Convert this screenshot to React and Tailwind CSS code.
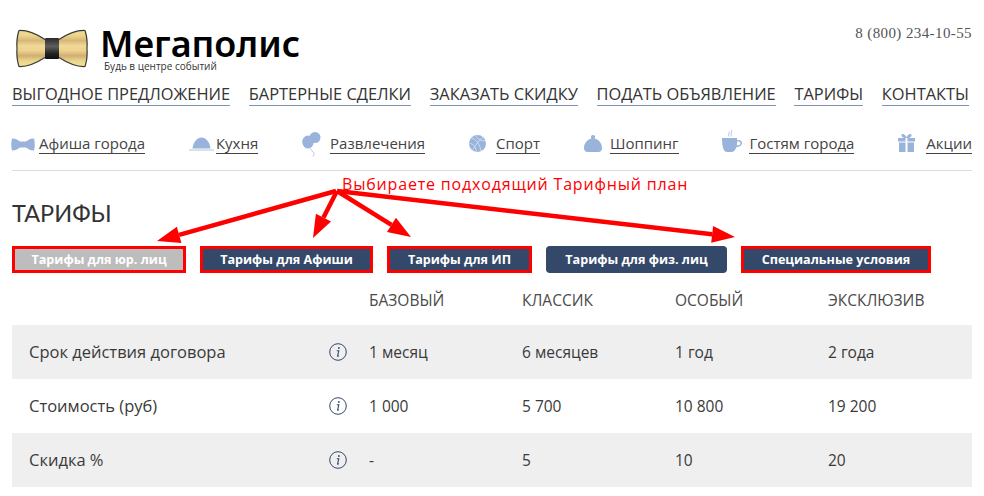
const mainLinks = [
  'ВЫГОДНОЕ ПРЕДЛОЖЕНИЕ',
  'БАРТЕРНЫЕ СДЕЛКИ',
  'ЗАКАЗАТЬ СКИДКУ',
  'ПОДАТЬ ОБЪЯВЛЕНИЕ',
  'ТАРИФЫ',
  'КОНТАКТЫ',
];

const tabs = [
  { label: 'Тарифы для юр. лиц', width: 'w-[174px]', mark: true, muted: true },
  { label: 'Тарифы для Афиши', width: 'w-[173px]', mark: true },
  { label: 'Тарифы для ИП', width: 'w-[145px]', mark: true },
  { label: 'Тарифы для физ. лиц', width: 'w-[181px]' },
  { label: 'Специальные условия', width: 'w-[190px]', mark: true },
];

const rows = [
  { name: 'Срок действия договора', values: ['1 месяц', '6 месяцев', '1 год', '2 года'], shaded: true },
  { name: 'Стоимость (руб)', values: ['1 000', '5 700', '10 800', '19 200'] },
  { name: 'Скидка %', values: ['-', '5', '10', '20'], shaded: true },
];

export default function App() {
  return (
    <div className="relative w-[984px] h-[496px] overflow-hidden bg-white px-3 font-['Open_Sans',sans-serif] text-[#333]">
      <Header />
      <CategoryNav />
      <h1 className="mt-[27px] font-['Lato',sans-serif] text-[23.5px] leading-[30px] text-[#333]">ТАРИФЫ</h1>
      <TabBar />
      <PriceTable />
      <Annotation />
    </div>
  );
}

function Header() {
  return (
    <>
      <div className="flex justify-between h-[75px]">
        <div className="flex pt-[29px] pl-[3px]">
          <BowLogo />
          <div className="ml-[11px] w-[204px]">
            <div className="font-['Noto_Sans',sans-serif] font-semibold text-[36px] leading-[30px] text-black">Мегаполис</div>
            <div className="mt-[1px] ml-[4px] text-[10px] leading-[12px] text-[#333]">Будь в центре событий</div>
          </div>
        </div>
        <div className="pt-[24px] font-['Liberation_Serif',serif] text-[15px] leading-[18px] tracking-[0.4px] text-[#555]">8 (800) 234-10-55</div>
      </div>
      <nav className="flex justify-between pr-[3px] mt-[7px] h-[24px]">
        {mainLinks.map(link => (
          <a key={link} className="h-[24px] border-b border-[#7f93b5] text-[16.4px] leading-[24px] text-[#333]">{link}</a>
        ))}
      </nav>
    </>
  );
}

function CategoryNav() {
  return (
    <nav className="flex justify-between items-end h-[54px] border-b border-[#d6dde6] mt-[11px] pb-[16px] text-[15px]">
      <Category icon={<BowIcon />} gap="gap-[4px]" label="Афиша города" />
      <Category icon={<DishIcon />} gap="gap-[2px]" label="Кухня" />
      <Category icon={<BalloonIcon />} gap="gap-[9px]" label="Развлечения" />
      <Category icon={<BallIcon />} gap="gap-[10px]" label="Спорт" />
      <Category icon={<BagIcon />} gap="gap-[8px]" label="Шоппинг" />
      <Category icon={<CupIcon />} gap="gap-[7px]" label="Гостям города" />
      <Category icon={<GiftIcon />} gap="gap-[11px]" label="Акции" />
    </nav>
  );
}

function Category({ icon, gap, label }) {
  return (
    <div className={`flex items-end ${gap}`}>
      {icon}
      <a className="border-b border-[#444] leading-[20px] text-[#444]">{label}</a>
    </div>
  );
}

function TabBar() {
  return (
    <div className="flex gap-[14px] mt-[18px]">
      {tabs.map(tab => (
        <button
          key={tab.label}
          className={`${tab.width} h-[27px] pt-[2px] flex items-center justify-center text-white text-[12.6px] font-bold ${tab.muted ? 'bg-[#bdbdbd]' : 'bg-[#34486a]'} ${tab.mark ? 'border-[3px] border-[#fe0000]' : 'rounded-[4px]'}`}
        >
          {tab.label}
        </button>
      ))}
    </div>
  );
}

function PriceTable() {
  return (
    <div className="mt-[13px] w-[960px]">
      <div className="grid grid-cols-[357px_153px_153px_153px_144px] h-[39px] pb-[10px] items-center text-[15.5px] text-[#4a4a4a]">
        <div />
        <div>БАЗОВЫЙ</div>
        <div>КЛАССИК</div>
        <div>ОСОБЫЙ</div>
        <div>ЭКСКЛЮЗИВ</div>
      </div>
      {rows.map(row => (
        <div key={row.name} className={`grid grid-cols-[357px_153px_153px_153px_144px] h-[54px] items-center text-[15.5px] text-[#3a3a3a] ${row.shaded ? 'bg-[#efefef]' : ''}`}>
          <div className="flex items-center justify-between pl-[17px] pr-[22px]">
            <span className="text-[16.5px]">{row.name}</span>
            <InfoIcon />
          </div>
          {row.values.map((value, i) => (
            <div key={i} className="pt-[1px]">{value}</div>
          ))}
        </div>
      ))}
    </div>
  );
}

function Annotation() {
  return (
    <>
      <div className="absolute left-[342px] top-[173px] text-[16px] leading-[22px] tracking-[0.82px] text-[#fe0000]">Выбираете подходящий Тарифный план</div>
      <svg className="absolute left-0 top-0 pointer-events-none" width="984" height="496" fill="#fe0000" stroke="none">
        <Arrow x1={336} y1={191} x2={157} y2={241} />
        <Arrow x1={337} y1={191} x2={313} y2={238} />
        <Arrow x1={337} y1={191} x2={411} y2={237} />
        <Arrow x1={337} y1={191} x2={735} y2={237} />
      </svg>
    </>
  );
}

function Arrow({ x1, y1, x2, y2 }) {
  const len = Math.hypot(x2 - x1, y2 - y1);
  const ux = (x2 - x1) / len;
  const uy = (y2 - y1) / len;
  const bx = x2 - ux * 23;
  const by = y2 - uy * 23;
  return (
    <>
      <line x1={x1} y1={y1} x2={bx} y2={by} stroke="#fe0000" strokeWidth="4.5" />
      <polygon points={`${x2},${y2} ${bx - uy * 8.5},${by + ux * 8.5} ${bx + uy * 8.5},${by - ux * 8.5}`} />
    </>
  );
}

function InfoIcon() {
  return (
    <svg width="18" height="18" viewBox="0 0 18 18" fill="none" stroke="#34486a">
      <circle cx="9" cy="9" r="8.300" strokeWidth="1" />
      <path d="M7.800 7.800h2l-1.200 5c-.1.500.4.600 1.300-.2" strokeWidth="1.100" />
      <circle cx="9.900" cy="5" r="0.900" fill="#34486a" stroke="none" />
    </svg>
  );
}

function BowLogo() {
  return (
    <svg width="74" height="39" viewBox="0 0 74 39">
      <defs>
        <linearGradient id="gold" x1="0" y1="0" x2="0" y2="1">
          <stop offset="0" stopColor="#f0dc90" />
          <stop offset="0.14" stopColor="#ecd48c" />
          <stop offset="0.28" stopColor="#d6b678" />
          <stop offset="0.42" stopColor="#f0d896" />
          <stop offset="0.56" stopColor="#eed290" />
          <stop offset="0.7" stopColor="#d0ae72" />
          <stop offset="0.84" stopColor="#ead48c" />
          <stop offset="1" stopColor="#f4e49a" />
        </linearGradient>
        <linearGradient id="knot" x1="0" y1="0" x2="0" y2="1">
          <stop offset="0" stopColor="#2a2a2a" />
          <stop offset="0.4" stopColor="#5e5e5e" />
          <stop offset="0.75" stopColor="#222" />
          <stop offset="1" stopColor="#111" />
        </linearGradient>
      </defs>
      <path
        d="M4 1.500C13 1 23 6 30 10.500L44 10.500C51 6 61 1 70 1.500C72.500 9 72.500 13 72 19.500C72.500 26 72.500 30 70 37.500C61 38 51 33 44 28.500L30 28.500C23 33 13 38 4 37.500C1.500 30 1.500 26 2 19.500C1.500 13 1.500 9 4 1.500Z"
        fill="url(#gold)"
        stroke="#3a3a34"
        strokeWidth="1.200"
        strokeLinejoin="round"
      />
      <rect x="30" y="9" width="14" height="21" rx="1" fill="url(#knot)" />
    </svg>
  );
}

function BowIcon() {
  return (
    <svg className="mb-[3px] -ml-[1px]" width="24" height="13" viewBox="0 0 24 13" fill="#9ab3da">
      <path d="M1 .500C4 0 7 2 9 3.500h6C17 2 20 0 23 .500c1 4 1 8 0 12-3 .500-6-1.500-8-3H9c-2 1.500-5 3.500-8 3-1-4-1-8 0-12z" />
    </svg>
  );
}

function DishIcon() {
  return (
    <svg className="mb-[3px]" width="25" height="14" viewBox="0 0 25 14" fill="#9ab3da">
      <path d="M3.500 11.500C4.500 4.500 8 .500 12.500.500s8 4 9 11z" />
      <rect x="0" y="12.500" width="25" height="1" fill="#b4c6e3" />
    </svg>
  );
}

function BalloonIcon() {
  return (
    <svg className="-mb-[3px]" width="19" height="25" viewBox="0 0 19 25" fill="#9ab3da">
      <circle cx="13" cy="5.500" r="5.500" />
      <ellipse cx="6" cy="10" rx="5.800" ry="6.500" />
      <path d="M8 16.500c2 1 1.500 3 3 3.500s1.500 2 0 4.500" fill="none" stroke="#b4c6e3" strokeWidth="1" />
    </svg>
  );
}

function BallIcon() {
  return (
    <svg className="mb-[2px]" width="17" height="17" viewBox="0 0 17 17" fill="#9ab3da">
      <circle cx="8.500" cy="8.500" r="8.500" />
      <path d="M2.500 3c4 1 8 5 9.500 13M.500 8.500c3 0 6 2.500 7 8M6.500.500c1 3 5 5.500 10 5.500M14 2.500c-3 2-7 6.500-10 12" fill="none" stroke="#e6ecf6" strokeWidth="0.700" />
    </svg>
  );
}

function BagIcon() {
  return (
    <svg className="mb-[2px]" width="18" height="17" viewBox="0 0 18 17" fill="#9ab3da">
      <path d="M7 2.500C6.500 1 7.500 0 9 0s2.500 1 2 2.500L10.500 3.500C15 4.500 18 8.500 18 13c0 2.500-1.500 4-3.500 4h-11C1.500 17 0 15.500 0 13c0-4.500 3-8.500 7.500-9.500z" />
    </svg>
  );
}

function CupIcon() {
  return (
    <svg className="mb-[2px]" width="20" height="22" viewBox="0 0 20 22" fill="#9ab3da">
      <path d="M0 8h15v2h1c2.500 0 4 1 4 3s-2 4-5.500 4c-1 2.500-2.500 5-4.500 5H5C2 22 0 18 0 8zM15 11.500v4c2 0 3.500-.800 3.500-2.200S17 11.500 15 11.500z" />
      <path d="M7 6.500C5.500 4.500 8 3.500 7 1.500M9.500 6.500C8 4.500 10.500 2.500 9.500 0" fill="none" stroke="#9ab3da" strokeWidth="0.700" />
    </svg>
  );
}

function GiftIcon() {
  return (
    <svg className="mb-[2px]" width="17" height="18" viewBox="0 0 17 18" fill="#9ab3da">
      <rect x="0" y="4" width="7.500" height="3.500" />
      <rect x="9.500" y="4" width="7.500" height="3.500" />
      <rect x="1" y="8.500" width="6.500" height="9.500" />
      <rect x="9.500" y="8.500" width="6.500" height="9.500" />
      <path d="M8.500 4C6 4 3 3 3.500 1S7 0 8.500 3.500C10 0 13-1 13.500 1S11 4 8.500 4z" />
    </svg>
  );
}
